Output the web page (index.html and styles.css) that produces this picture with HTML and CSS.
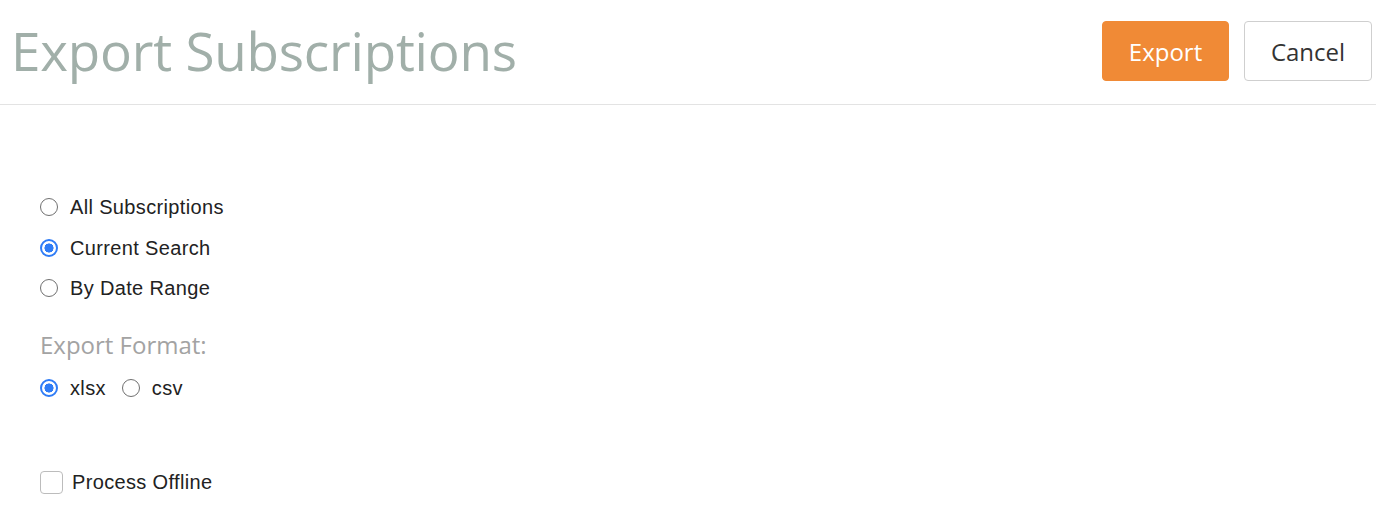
FILE: index.html
```html
<!DOCTYPE html>
<html>
<head>
<meta charset="utf-8">
<link rel="stylesheet" href="styles.css">
</head>
<body>
<header class="header">
  <h1 class="title">Export Subscriptions</h1>
  <div class="actions">
    <button class="btn btn-primary">Export</button>
    <button class="btn btn-default">Cancel</button>
  </div>
</header>
<main class="content">
  <div class="radio-group">
    <label class="option"><input type="radio" name="scope"><span>All Subscriptions</span></label>
    <label class="option"><input type="radio" name="scope" checked><span>Current Search</span></label>
    <label class="option"><input type="radio" name="scope"><span>By Date Range</span></label>
  </div>
  <div class="format">
    <div class="format-label">Export Format:</div>
    <div class="inline-options">
      <label class="option inline"><input type="radio" name="fmt" checked><span>xlsx</span></label>
      <label class="option inline"><input type="radio" name="fmt"><span>csv</span></label>
    </div>
  </div>
  <label class="check"><input type="checkbox"><span>Process Offline</span></label>
</main>
</body>
</html>
```
FILE: styles.css
```css
html, body {
  margin: 0;
  padding: 0;
  background: #fff;
}
body {
  font-family: "Liberation Sans", Arial, sans-serif;
  color: #222;
}
.header {
  height: 104px;
  border-bottom: 1px solid #e3e3e3;
  display: flex;
  align-items: flex-start;
  justify-content: space-between;
  padding: 0 4px 0 11px;
}
.title {
  margin: 0;
  padding-top: 14px;
  font-family: "Open Sans", sans-serif;
  font-weight: 400;
  font-size: 53px;
  line-height: 74px;
  color: #a1afa9;
  letter-spacing: -0.2px;
}
.actions {
  display: flex;
  gap: 15px;
  padding-top: 21px;
}
.btn {
  height: 60px;
  font-family: "Open Sans", sans-serif;
  font-size: 24px;
  border-radius: 4px;
  padding: 0;
  cursor: pointer;
}
.btn-primary {
  width: 127px;
  background: #f08a36;
  border: 1px solid #f08a36;
  color: #fff;
}
.btn-default {
  width: 128px;
  background: #fff;
  border: 1px solid #cfcfcf;
  color: #333;
}
.content {
  padding: 91px 0 0 40px;
}
.radio-group {
  display: flex;
  flex-direction: column;
  gap: 18.5px;
}
.option {
  display: flex;
  align-items: center;
  gap: 12px;
  font-size: 20px;
  letter-spacing: 0.35px;
  line-height: 22px;
  color: #222;
}
.option input {
  appearance: none;
  -webkit-appearance: none;
  margin: 0;
  width: 18px;
  height: 18px;
  border: 1px solid #707070;
  border-radius: 50%;
  background: #fff;
  box-sizing: border-box;
  flex: none;
}
.option input:checked {
  border: 2px solid #2f7cf6;
  background: radial-gradient(circle, #2f7cf6 0 4.3px, #fff 4.8px);
}
.format {
  margin-top: 31px;
}
.format-label {
  font-family: "Open Sans", sans-serif;
  font-size: 24px;
  line-height: 30px;
  color: #a3a3a3;
  margin-bottom: 17px;
}
.inline-options {
  display: flex;
  gap: 16px;
}
.check {
  display: flex;
  align-items: center;
  gap: 9px;
  margin-top: 71px;
  font-size: 20px;
  letter-spacing: 0.35px;
  line-height: 24px;
  color: #222;
}
.check input {
  appearance: none;
  -webkit-appearance: none;
  margin: 0;
  width: 23px;
  height: 23px;
  border: 1px solid #bcbcbc;
  border-radius: 4px;
  background: #fff;
  box-sizing: border-box;
}
```
